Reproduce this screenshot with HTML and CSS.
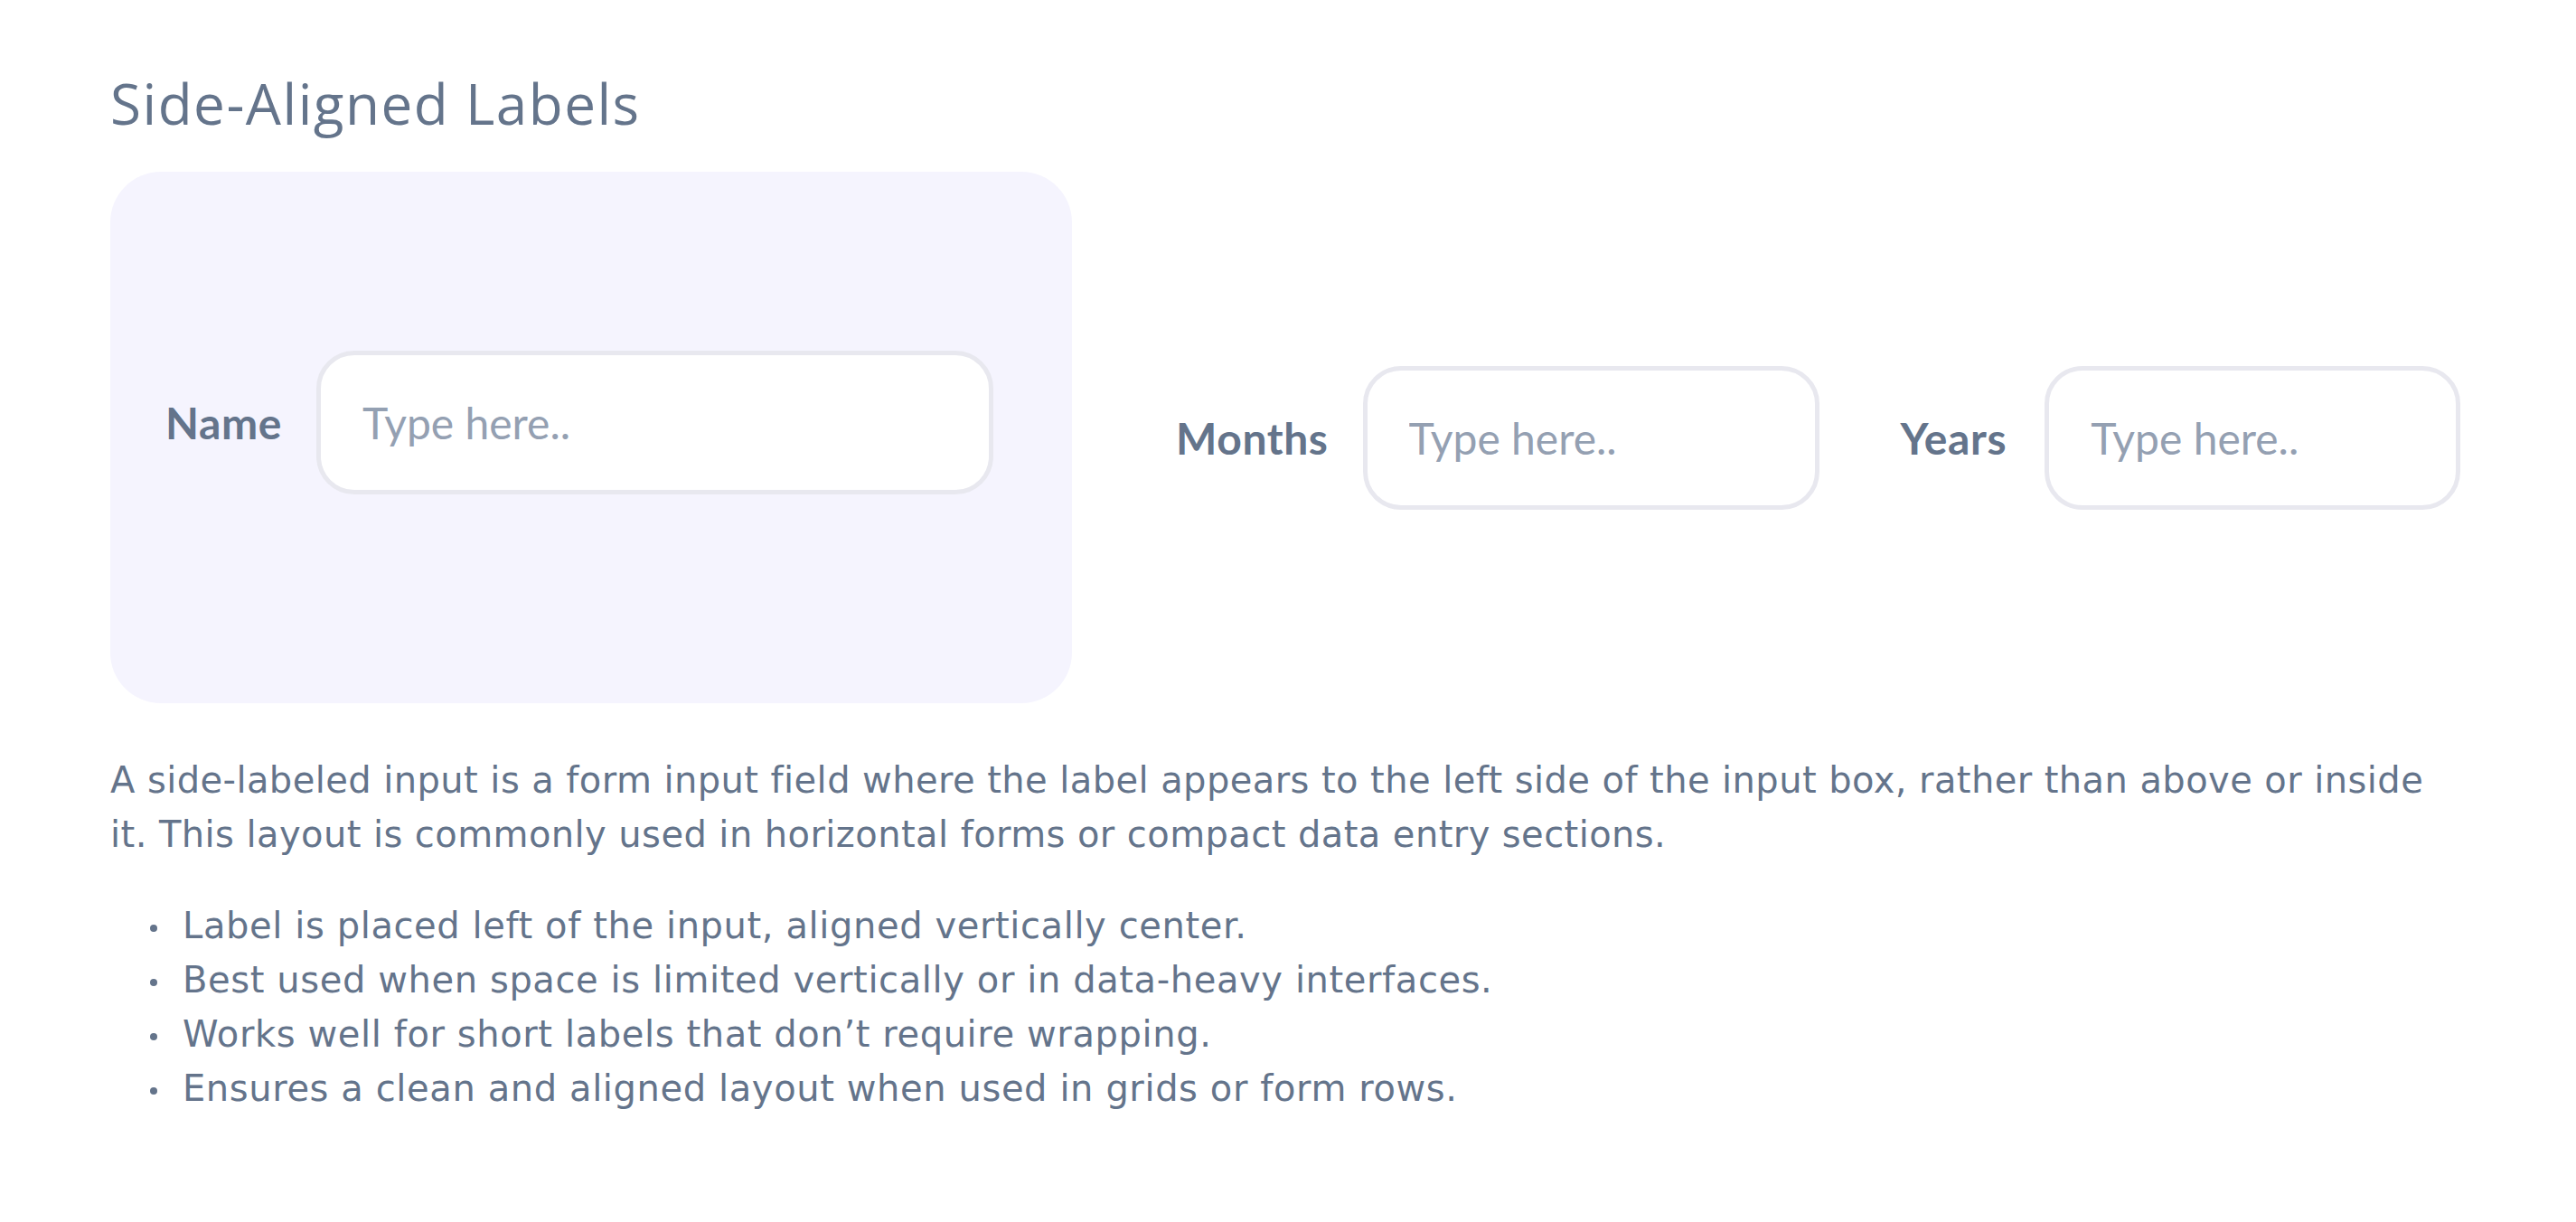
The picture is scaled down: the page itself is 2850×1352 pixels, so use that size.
FILE: index.html
```html
<!DOCTYPE html>
<html lang="en">
<head>
<meta charset="utf-8">
<title>Side-Aligned Labels</title>
<link rel="stylesheet" href="styles.css">
</head>
<body>
<main class="page">
  <h1 class="title">Side-Aligned Labels</h1>
  <div class="demo-row">
    <div class="card">
      <label class="field">
        <span class="field-label">Name</span>
        <input class="field-input input-name" type="text" placeholder="Type here..">
      </label>
    </div>
    <label class="field field-months">
      <span class="field-label">Months</span>
      <input class="field-input input-months" type="text" placeholder="Type here..">
    </label>
    <label class="field field-years">
      <span class="field-label">Years</span>
      <input class="field-input input-years" type="text" placeholder="Type here..">
    </label>
  </div>
  <p class="desc">A side-labeled input is a form input field where the label appears to the left side of the input box, rather than above or inside it. This layout is commonly used in horizontal forms or compact data entry sections.</p>
  <ul class="points">
    <li>Label is placed left of the input, aligned vertically center.</li>
    <li>Best used when space is limited vertically or in data-heavy interfaces.</li>
    <li>Works well for short labels that don’t require wrapping.</li>
    <li>Ensures a clean and aligned layout when used in grids or form rows.</li>
  </ul>
</main>
</body>
</html>
```

FILE: styles.css
```css
* { box-sizing: border-box; }

html, body {
  margin: 0;
  padding: 0;
  background: #ffffff;
}

.page {
  padding: 77px 122px 0 122px;
  width: 2850px;
  color: #64748b;
}

.title {
  margin: 0;
  font-family: "Open Sans", "Lato", sans-serif;
  font-weight: 400;
  font-size: 62px;
  line-height: 1.2;
  letter-spacing: 1.5px;
  color: #64748b;
}

.demo-row {
  margin-top: 39px;
  display: flex;
  align-items: center;
}

.card {
  width: 1064px;
  background: #f5f4fe;
  border-radius: 56px;
  padding: 198px 0 231px 61px;
  display: flex;
  align-items: center;
}

.field {
  display: flex;
  align-items: center;
  gap: 38px;
}

.field-label {
  font-family: "Lato", "Open Sans", sans-serif;
  font-weight: 700;
  font-size: 48px;
  line-height: 1.2;
  letter-spacing: 0.6px;
  color: #64748b;
}

.field-input {
  height: 159px;
  border: 5px solid #e8e8ef;
  border-radius: 42px;
  background: #ffffff;
  padding: 0 0 0 46px;
  font-family: "Lato", "Open Sans", sans-serif;
  font-weight: 400;
  font-size: 48px;
  color: #475569;
  outline: none;
}

.field-input::placeholder {
  color: #94a0b2;
  opacity: 1;
}

.input-name { width: 749px; }

.field-months {
  margin-left: 115px;
  gap: 38px;
}
.input-months { width: 505px; }

.field-years {
  margin-left: 90px;
  gap: 42px;
}
.input-years { width: 460px; }

.desc {
  margin: 55px 0 0 0;
  max-width: 2590px;
  font-family: "DejaVu Sans", "Open Sans", sans-serif;
  font-size: 40px;
  line-height: 60px;
  letter-spacing: 0.42px;
  color: #64748b;
}

.points {
  list-style: none;
  margin: 41px 0 0 0;
  padding: 0 0 0 44px;
  font-family: "DejaVu Sans", "Open Sans", sans-serif;
  font-size: 40px;
  line-height: 60px;
  letter-spacing: 0.6px;
  color: #64748b;
}

.points li {
  display: flex;
  align-items: center;
}

.points li::before {
  content: "";
  flex: none;
  width: 8px;
  height: 8px;
  border-radius: 50%;
  background: #64748b;
  margin: 6px 28px 0 0;
}
```
